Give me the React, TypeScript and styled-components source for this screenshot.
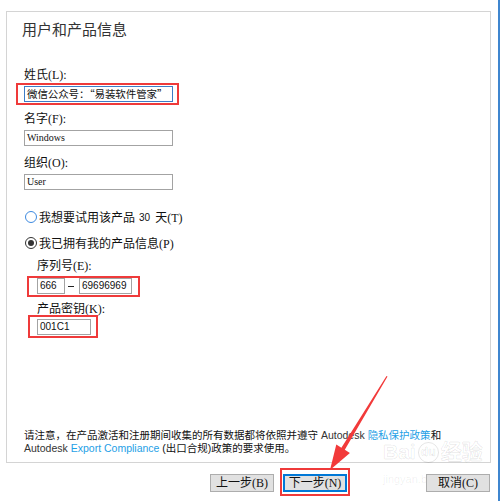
import React from 'react';
import styled, { createGlobalStyle } from 'styled-components';

const GlobalStyle = createGlobalStyle`
  html, body {
    margin: 0;
    padding: 0;
    background: #fff;
  }
`;

const CJK = `"Noto Sans CJK SC", "Liberation Sans", sans-serif`;
const SERIF_CJK = `"Liberation Serif", "Noto Sans CJK SC", serif`;

const Window = styled.div`
  position: relative;
  box-sizing: border-box;
  width: 500px;
  height: 501px;
  padding: 11px 0 0 6px;
  border-right: 2px solid #3f86cf;
  background: #fff;
  display: flex;
  flex-direction: column;
  overflow: hidden;
`;

const Panel = styled.div`
  box-sizing: border-box;
  width: 485px;
  height: 452px;
  border: 1px solid #d4d4d4;
  padding: 7px 0 7px 17px;
  display: flex;
  flex-direction: column;
`;

const Title = styled.div`
  font-family: ${CJK};
  font-size: 15px;
  line-height: 20px;
  color: #333;
  margin-left: -2px;
`;

const Form = styled.div`
  margin-top: 28px;
  display: flex;
  flex-direction: column;
  align-items: flex-start;
`;

const Field = styled.div<{ $gap?: number }>`
  display: flex;
  flex-direction: column;
  align-items: flex-start;
  margin-bottom: ${(p) => p.$gap ?? 9}px;
`;

const Label = styled.div<{ $gap?: number }>`
  font-family: ${SERIF_CJK};
  font-size: 12px;
  line-height: 16px;
  color: #111;
  margin-bottom: ${(p) => p.$gap ?? 3}px;
`;

const TextBox = styled.div<{ $w: number; $sans?: boolean; $focus?: boolean }>`
  box-sizing: border-box;
  width: ${(p) => p.$w}px;
  height: 16px;
  border: 1px solid ${(p) => (p.$focus ? '#3d7cc6' : '#a3a3a3')};
  padding: 0 2px;
  font-family: ${(p) => (p.$sans ? `"Liberation Sans", "Noto Sans CJK SC", sans-serif` : SERIF_CJK)};
  font-size: 10px;
  line-height: 14px;
  color: #111;
  white-space: nowrap;
  overflow: hidden;
  background: #fff;
`;

const FullWidthValue = styled.span`
  font-family: ${CJK};
  font-size: 10.5px;
  letter-spacing: -0.1px;
`;

const Highlight = styled.div<{ $t: number; $r: number; $b: number; $l: number }>`
  display: inline-flex;
  align-items: center;
  border: 2px solid #ef3a3a;
  margin: ${(p) => `-${p.$t}px -${p.$r}px -${p.$b}px -${p.$l}px`};
  padding: ${(p) => `${p.$t - 2}px ${p.$r - 2}px ${p.$b - 2}px ${p.$l - 2}px`};
`;

const Dash = styled.span`
  width: 6px;
  height: 1px;
  background: #222;
  margin: 0 5px 0 3px;
`;

const RadioGroup = styled.div`
  margin-top: 9px;
  display: flex;
  flex-direction: column;
  gap: 8px;
`;

const RadioRow = styled.div`
  display: flex;
  align-items: center;
  height: 18px;
  margin-left: 1px;
  font-family: ${SERIF_CJK};
  font-size: 12px;
  color: #111;
`;

const RadioCircle = styled.span<{ $checked?: boolean }>`
  box-sizing: border-box;
  width: 12px;
  height: 12px;
  border-radius: 50%;
  border: 1px solid ${(p) => (p.$checked ? '#333' : '#3d8ae0')};
  margin-right: 2px;
  display: flex;
  align-items: center;
  justify-content: center;

  &::after {
    content: '';
    display: ${(p) => (p.$checked ? 'block' : 'none')};
    width: 6px;
    height: 6px;
    border-radius: 50%;
    background: #333;
  }
`;

const Num = styled.span`
  font-family: "Liberation Sans", sans-serif;
  font-size: 10px;
  margin: 0 5px 0 4px;
`;

const Indent = styled.div`
  margin-top: 6px;
  margin-left: 13px;
  display: flex;
  flex-direction: column;
  align-items: flex-start;
`;

const Row = styled.div`
  display: flex;
  align-items: center;
`;

const Notice = styled.div`
  margin-top: auto;
  font-family: "Liberation Sans", "Noto Sans CJK SC", sans-serif;
  font-size: 10.5px;
  line-height: 13px;
  color: #111;
  white-space: nowrap;
`;

const Brand = styled.span`
  color: #333;
`;

const Link = styled.span`
  color: #1ea0e6;
`;

const ButtonBar = styled.div`
  position: relative;
  z-index: 1;
  margin-top: 11px;
  width: 484px;
  display: flex;
  justify-content: flex-end;
  align-items: center;
`;

const Button = styled.div<{ $default?: boolean }>`
  box-sizing: border-box;
  width: 64px;
  height: 18px;
  background: #e1e1e1;
  border: 1px solid ${(p) => (p.$default ? '#0078d7' : '#adadad')};
  box-shadow: ${(p) => (p.$default ? 'inset 0 0 0 1px #0078d7' : 'none')};
  font-family: ${SERIF_CJK};
  font-size: 12px;
  line-height: 16px;
  text-align: center;
  color: #111;
`;

const Spacer = styled.div<{ $w: number }>`
  width: ${(p) => p.$w}px;
  flex-shrink: 0;
`;

const Overlay = styled.svg`
  position: absolute;
  left: 0;
  top: 0;
  z-index: 2;
  pointer-events: none;
`;

const Watermark = styled.div`
  position: absolute;
  left: 383px;
  top: 441px;
  pointer-events: none;
  color: rgba(255, 255, 255, 0.6);
  -webkit-text-stroke: 0.6px rgba(0, 0, 0, 0.12);
  font-family: "Liberation Sans", "Noto Sans CJK SC", sans-serif;
`;

const MarkTop = styled.div`
  display: flex;
  align-items: center;
  font-size: 21px;
  font-weight: bold;
  line-height: 22px;
`;

const MarkDu = styled.span`
  display: inline-flex;
  align-items: center;
  justify-content: center;
  width: 19px;
  height: 19px;
  border-radius: 50%;
  border: 1px solid rgba(0, 0, 0, 0.1);
  font-size: 12px;
  margin: 0 2px;
`;

const MarkSub = styled.div`
  font-size: 11px;
  line-height: 14px;
  margin-top: 9px;
  color: rgba(0, 0, 0, 0.07);
  -webkit-text-stroke: 0;
`;

export default function App() {
  return (
    <>
      <GlobalStyle />
      <Window>
        <Panel>
          <Title>用户和产品信息</Title>
          <Form>
            <Field>
              <Label>姓氏(L):</Label>
              <Highlight $t={3} $r={6} $b={3} $l={8}>
                <TextBox $w={149} $focus>
                  <FullWidthValue>微信公众号：“易装软件管家”</FullWidthValue>
                </TextBox>
              </Highlight>
            </Field>
            <Field>
              <Label>名字(F):</Label>
              <TextBox $w={149}>Windows</TextBox>
            </Field>
            <Field>
              <Label>组织(O):</Label>
              <TextBox $w={149}>User</TextBox>
            </Field>
          </Form>

          <RadioGroup>
            <RadioRow>
              <RadioCircle />
              我想要试用该产品<Num>30</Num>天(T)
            </RadioRow>
            <RadioRow>
              <RadioCircle $checked />
              我已拥有我的产品信息(P)
            </RadioRow>
          </RadioGroup>

          <Indent>
            <Field $gap={7}>
              <Label $gap={4}>序列号(E):</Label>
              <Highlight $t={2} $r={8} $b={3} $l={10}>
                <Row>
                  <TextBox $w={28} $sans>666</TextBox>
                  <Dash />
                  <TextBox $w={53} $sans>69696969</TextBox>
                </Row>
              </Highlight>
            </Field>
            <Field>
              <Label $gap={2}>产品密钥(K):</Label>
              <Highlight $t={4} $r={7} $b={3} $l={9}>
                <TextBox $w={54} $sans>001C1</TextBox>
              </Highlight>
            </Field>
          </Indent>

          <Notice>
            请注意，在产品激活和注册期间收集的所有数据都将依照并遵守 <Brand>Autodesk</Brand>{' '}
            <Link>隐私保护政策</Link>和
            <br />
            <Brand>Autodesk</Brand> <Link>Export Compliance</Link> (出口合规)政策的要求使用。
          </Notice>
        </Panel>

        <Watermark>
          <MarkTop>
            Bai<MarkDu>du</MarkDu>经验
          </MarkTop>
          <MarkSub>jingyan.baidu.com</MarkSub>
        </Watermark>

        <ButtonBar>
          <Button>上一步(B)</Button>
          <Spacer $w={9} />
          <Highlight $t={6} $r={3} $b={4} $l={3}>
            <Button $default>下一步(N)</Button>
          </Highlight>
          <Spacer $w={79} />
          <Button>取消(C)</Button>
        </ButtonBar>

        <Overlay width={500} height={501} viewBox="0 0 500 501">
          <polygon
            points="387.5,376.5 386.5,376 341.4,447.7 336.3,444.5 330,470 349.9,452.9 344.8,449.7"
            fill="#f23a3a"
          />
        </Overlay>
      </Window>
    </>
  );
}
